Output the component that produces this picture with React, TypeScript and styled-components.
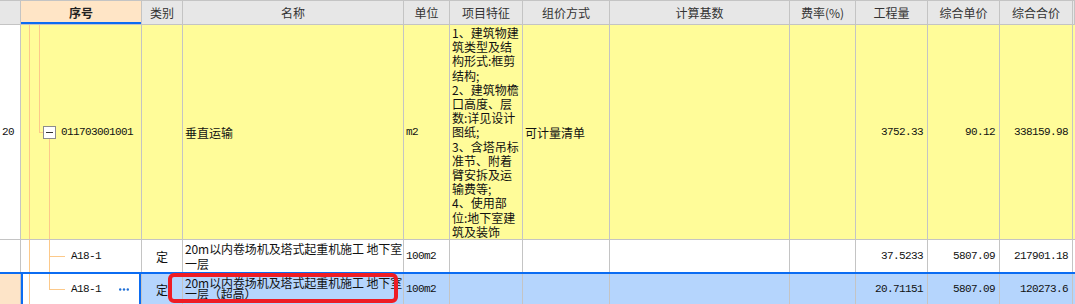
import React from "react";
import styled, { createGlobalStyle, css } from "styled-components";

const GlobalStyle = createGlobalStyle`
  html, body {
    margin: 0;
    padding: 0;
    background: #ffffff;
    overflow: hidden;
  }
  body {
    font-family: "Noto Sans CJK SC", "Liberation Sans", sans-serif;
    font-size: 12px;
    color: #111111;
  }
`;

const COLUMNS = "21px 121px 41px 221px 46px 73px 87px 180px 66px 72px 72px 73px 1fr";
const GRID_LINE = "#c4c4c4";
const TREE_LINE = "#fcc98a";
const SELECT_BLUE = "#0b6cf2";

type Tone = "header" | "yellow" | "white" | "selected";

const toneBg: Record<Tone, string> = {
  header: "#e7e7e7",
  yellow: "#fffc99",
  white: "#ffffff",
  selected: "#b5d5fd",
};

const Sheet = styled.div`
  position: relative;
  width: 1075px;
  height: 304px;
  overflow: hidden;
`;

const Row = styled.div<{ $height: number; $tone: Tone }>`
  display: grid;
  grid-template-columns: ${COLUMNS};
  height: ${({ $height }) => $height}px;
  box-sizing: border-box;
  background: ${({ $tone }) => toneBg[$tone]};
  border-bottom: 1px solid ${GRID_LINE};
  ${({ $tone }) =>
    $tone === "header" &&
    css`
      border-top: 1px solid ${GRID_LINE};
      color: #333333;
    `}
  ${({ $tone }) =>
    $tone === "selected" &&
    css`
      margin-top: -1px;
      border-top: 2px solid ${SELECT_BLUE};
    `}
`;

const Cell = styled.div<{ $align?: "left" | "center" | "right"; $mono?: boolean; $bg?: string }>`
  display: flex;
  align-items: center;
  justify-content: ${({ $align = "left" }) =>
    $align === "center" ? "center" : $align === "right" ? "flex-end" : "flex-start"};
  box-sizing: border-box;
  min-width: 0;
  overflow: hidden;
  white-space: nowrap;
  border-right: 1px solid ${GRID_LINE};
  padding: 0 ${({ $align }) => ($align === "right" ? "4px" : "2px")} 0 2px;
  ${({ $bg }) => $bg && `background: ${$bg};`}
  ${({ $mono }) =>
    $mono &&
    css`
      font-family: "Liberation Mono", "DejaVu Sans Mono", monospace;
      font-size: 11px;
      letter-spacing: -0.6px;
    `}
`;

const HeadCell = styled(Cell)<{ $active?: boolean }>`
  justify-content: center;
  padding: 0;
  ${({ $active }) =>
    $active &&
    css`
      background: #ffe5c6;
      font-weight: 700;
      color: #222222;
      box-shadow: inset 0 -2px 0 ${SELECT_BLUE};
    `}
`;

const TreeCell = styled(Cell)<{ $selected?: boolean }>`
  align-items: stretch;
  padding: 0;
  ${({ $selected }) =>
    $selected &&
    css`
      background: #ffffff;
      box-shadow: inset 2px 0 0 ${SELECT_BLUE}, inset -2px 0 0 ${SELECT_BLUE};
    `}
`;

const Indent = styled.div<{ $w: number; $line?: boolean }>`
  flex: 0 0 ${({ $w }) => $w}px;
  box-sizing: border-box;
  ${({ $line }) => $line && `border-left: 1px solid ${TREE_LINE};`}
`;

const Elbow = styled.div<{ $w: number }>`
  flex: 0 0 ${({ $w }) => $w}px;
  display: flex;
  flex-direction: column;
`;

const ElbowTop = styled.div`
  flex: 1;
  border-left: 1px solid ${TREE_LINE};
  border-bottom: 1px solid ${TREE_LINE};
`;

const ElbowBottom = styled.div<{ $line?: boolean }>`
  flex: 1;
  ${({ $line }) => $line && `border-left: 1px solid ${TREE_LINE};`}
`;

const ToggleColumn = styled.div`
  flex: 0 0 13px;
  display: flex;
  flex-direction: column;
`;

const ToggleSpacer = styled.div<{ $line?: boolean }>`
  flex: 1;
  margin-left: 6px;
  ${({ $line }) => $line && `border-left: 1px solid ${TREE_LINE};`}
`;

const ToggleBox = styled.div`
  flex: 0 0 13px;
  box-sizing: border-box;
  border: 1px solid #8c8c8c;
  background: #ffffff;
  display: flex;
  align-items: center;
  justify-content: center;

  &::before {
    content: "";
    width: 7px;
    height: 1px;
    background: #333333;
  }
`;

const Code = styled.span<{ $pad: number }>`
  flex: 1;
  display: flex;
  align-items: center;
  padding-left: ${({ $pad }) => $pad}px;
  font-family: "Liberation Mono", "DejaVu Sans Mono", monospace;
  font-size: 11px;
  letter-spacing: -0.6px;
  color: #111111;
`;

const MoreDots = styled.svg`
  align-self: center;
  margin-right: 12px;
  flex: 0 0 auto;
`;

const FeatureCell = styled(Cell)`
  flex-direction: column;
  align-items: flex-start;
  justify-content: flex-start;
  padding-top: 1px;
  line-height: 14.2px;
`;

const NameCell = styled(Cell)<{ $tight?: boolean }>`
  flex-direction: column;
  align-items: flex-start;
  justify-content: center;
  line-height: 15px;
  letter-spacing: -0.1px;
  ${({ $tight }) =>
    $tight &&
    css`
      justify-content: flex-start;
      padding-top: 3px;
      line-height: 11px;
    `}
`;

const Annotation = styled.div`
  position: absolute;
  left: 168px;
  top: 273px;
  width: 230px;
  height: 30px;
  box-sizing: border-box;
  border: 4px solid #ee1c24;
  border-radius: 6px;
  pointer-events: none;
`;

const headers = [
  "",
  "序号",
  "类别",
  "名称",
  "单位",
  "项目特征",
  "组价方式",
  "计算基数",
  "费率(%)",
  "工程量",
  "综合单价",
  "综合合价",
  "",
];

const featureLines = [
  "1、建筑物建",
  "筑类型及结",
  "构形式:框剪",
  "结构;",
  "2、建筑物檐",
  "口高度、层",
  "数:详见设计",
  "图纸;",
  "3、含塔吊标",
  "准节、附着",
  "臂安拆及运",
  "输费等;",
  "4、使用部",
  "位:地下室建",
  "筑及装饰",
];

interface QuotaRow {
  code: string;
  nameLines: string[];
  unit: string;
  qty: string;
  price: string;
  total: string;
  selected: boolean;
}

const quotaRows: QuotaRow[] = [
  {
    code: "A18-1",
    nameLines: ["20m以内卷场机及塔式起重机施工 地下室", "一层"],
    unit: "100m2",
    qty: "37.5233",
    price: "5807.09",
    total: "217901.18",
    selected: false,
  },
  {
    code: "A18-1",
    nameLines: ["20m以内卷场机及塔式起重机施工 地下室", "一层（超高）"],
    unit: "100m2",
    qty: "20.71151",
    price: "5807.09",
    total: "120273.6",
    selected: true,
  },
];

function QuotaLine({ row, last }: { row: QuotaRow; last: boolean }) {
  return (
    <Row $height={33} $tone={row.selected ? "selected" : "white"}>
      <Cell $bg={row.selected ? "#fde4c8" : "#ffffff"} />
      <TreeCell $selected={row.selected}>
        <Indent $w={8} />
        <Indent $w={20} $line />
        <Elbow $w={16}>
          <ElbowTop />
          <ElbowBottom $line={!last} />
        </Elbow>
        <Code $pad={6}>{row.code}</Code>
        {row.selected && (
          <MoreDots width="10" height="3" viewBox="0 0 10 3">
            <circle cx="1.2" cy="1.5" r="1.2" fill="#1f6fd6" />
            <circle cx="5" cy="1.5" r="1.2" fill="#1f6fd6" />
            <circle cx="8.8" cy="1.5" r="1.2" fill="#1f6fd6" />
          </MoreDots>
        )}
      </TreeCell>
      <Cell $align="center">定</Cell>
      <NameCell $tight={row.selected}>
        {row.nameLines.map((line) => (
          <span key={line}>{line}</span>
        ))}
      </NameCell>
      <Cell $mono>{row.unit}</Cell>
      <Cell />
      <Cell />
      <Cell />
      <Cell />
      <Cell $align="right" $mono>
        {row.qty}
      </Cell>
      <Cell $align="right" $mono>
        {row.price}
      </Cell>
      <Cell $align="right" $mono>
        {row.total}
      </Cell>
      <Cell />
    </Row>
  );
}

export default function App() {
  return (
    <>
      <GlobalStyle />
      <Sheet>
        <Row $height={25} $tone="header">
          {headers.map((label, i) => (
            <HeadCell key={i} $active={label === "序号"}>
              {label}
            </HeadCell>
          ))}
        </Row>

        <Row $height={215} $tone="yellow">
          <Cell $bg="#ffffff" $mono>
            20
          </Cell>
          <TreeCell>
            <Indent $w={8} />
            <Indent $w={10} $line />
            <Elbow $w={4}>
              <ElbowTop />
              <ElbowBottom />
            </Elbow>
            <ToggleColumn>
              <ToggleSpacer />
              <ToggleBox />
              <ToggleSpacer $line />
            </ToggleColumn>
            <Code $pad={5}>011703001001</Code>
          </TreeCell>
          <Cell />
          <Cell>垂直运输</Cell>
          <Cell $mono>m2</Cell>
          <FeatureCell>
            {featureLines.map((line) => (
              <span key={line}>{line}</span>
            ))}
          </FeatureCell>
          <Cell>可计量清单</Cell>
          <Cell />
          <Cell />
          <Cell $align="right" $mono>
            3752.33
          </Cell>
          <Cell $align="right" $mono>
            90.12
          </Cell>
          <Cell $align="right" $mono>
            338159.98
          </Cell>
          <Cell />
        </Row>

        {quotaRows.map((row, i) => (
          <QuotaLine key={i} row={row} last={i === quotaRows.length - 1} />
        ))}

        <Annotation />
      </Sheet>
    </>
  );
}
